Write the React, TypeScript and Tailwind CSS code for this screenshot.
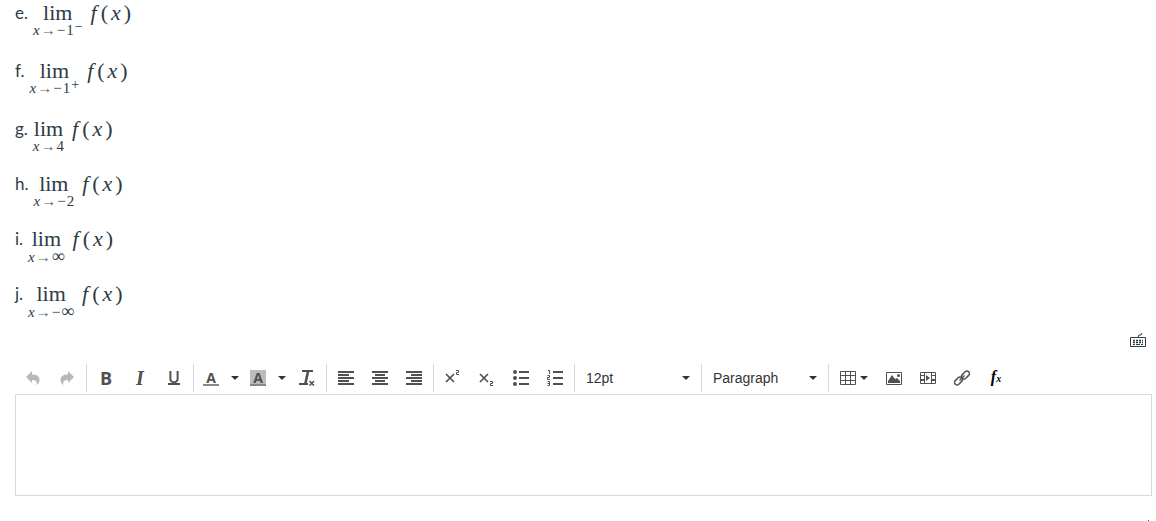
import React from 'react';

interface Limit {
  label: string;
  target: string;
  side?: string;
}

const limits: Limit[] = [
  { label: 'e.', target: '−1', side: '−' },
  { label: 'f.', target: '−1', side: '+' },
  { label: 'g.', target: '4' },
  { label: 'h.', target: '−2' },
  { label: 'i.', target: '∞' },
  { label: 'j.', target: '−∞' },
];

const LimitRow: React.FC<Limit> = ({ label, target, side }) => (
  <li className={`flex items-start gap-[5px] ${side ? 'h-[58px]' : 'h-[55px]'}`}>
    <span className="font-[Lato,sans-serif] text-[17px] leading-[18px]">{label}</span>
    <span className="flex items-start gap-2 font-['Liberation_Serif',serif]">
      <span className="flex flex-col items-center">
        <span className="text-[22px] leading-[18px]">lim</span>
        <span className="mt-px flex h-3 items-baseline gap-px text-[15px] leading-[14px]">
          <i className="leading-[14px]">x</i>
          <span className="leading-[14px] opacity-80">→</span>
          {target.split('').map((c) => (
            <span key={c} className={c === '∞' ? 'text-lg leading-[14px]' : 'leading-[14px]'}>{c}</span>
          ))}
          {side && <span className="-translate-y-1 text-sm leading-[14px]">{side}</span>}
        </span>
      </span>
      <span className="flex gap-0.5 text-[22px] leading-[18px]">
        <i className="pr-0.5">f</i>
        <span>(</span>
        <i className="px-px">x</i>
        <span>)</span>
      </span>
    </span>
  </li>
);

const Caret = () => (
  <svg width="8" height="4" viewBox="0 0 8 4" fill="#333"><path d="M0 0h8L4 4z" /></svg>
);

const Icon: React.FC<{ children: React.ReactNode }> = ({ children }) => (
  <svg width="16" height="16" viewBox="0 0 16 16" fill="currentColor">{children}</svg>
);

interface ToolProps {
  label: string;
  width?: string;
  disabled?: boolean;
  children: React.ReactNode;
}

const Tool: React.FC<ToolProps> = ({ label, width = 'w-[34px]', disabled, children }) => (
  <button
    type="button"
    aria-label={label}
    disabled={disabled}
    className={`flex h-7 items-center justify-center gap-1 disabled:opacity-40 ${width}`}
  >
    {children}
  </button>
);

const Group: React.FC<{ children: React.ReactNode }> = ({ children }) => (
  <div className="flex border-l border-[#d9d9d9] px-0.5">{children}</div>
);

const Picker: React.FC<{ label: string; options: string[] }> = ({ label, options }) => (
  <div className="relative flex w-[127px] items-center border-l border-[#d9d9d9]">
    <select
      aria-label={label}
      className="h-7 w-full appearance-none bg-transparent pl-[11px] font-['Liberation_Sans',sans-serif] text-sm text-[#333]"
    >
      {options.map((o) => <option key={o}>{o}</option>)}
    </select>
    <span className="pointer-events-none absolute right-[11px]"><Caret /></span>
  </div>
);

const Toolbar = () => (
  <div role="toolbar" aria-label="Formatting" className="flex h-7 pl-4 text-[#505050]">
    <div className="flex pr-0.5">
      <Tool label="Undo" disabled>
        <Icon><path d="M7 1v3.500c5 0 7.500 2 7.500 5.500 0 2-1 4-3 5 1-3.500-.5-5-4.500-5V13L1 7z" /></Icon>
      </Tool>
      <Tool label="Redo" disabled>
        <Icon><path d="M9 1v3.500c-5 0-7.500 2-7.500 5.500 0 2 1 4 3 5-1-3.500.5-5 4.500-5V13l6-6z" /></Icon>
      </Tool>
    </div>
    <Group>
      <Tool label="Bold"><span className="font-['Open_Sans',sans-serif] text-lg leading-4 font-bold">B</span></Tool>
      <Tool label="Italic"><span className="font-['Liberation_Serif',serif] text-xl leading-4 font-bold italic">I</span></Tool>
      <Tool label="Underline">
        <span className="w-3 border-b-2 border-current font-['Open_Sans',sans-serif] text-base leading-3 font-semibold">U</span>
      </Tool>
    </Group>
    <Group>
      <Tool label="Text color" width="w-[30px]">
        <span className="h-4 w-4 border-b-2 border-[#888] font-['Open_Sans',sans-serif] text-sm leading-4 font-bold">A</span>
      </Tool>
      <Tool label="Choose text color" width="w-[17px]"><Caret /></Tool>
      <Tool label="Background color" width="w-[30px]">
        <span className="h-4 w-4 border-b-2 border-[#888] bg-[#bbb] font-['Open_Sans',sans-serif] text-sm leading-4 font-bold">A</span>
      </Tool>
      <Tool label="Choose background color" width="w-[17px]"><Caret /></Tool>
      <Tool label="Clear formatting">
        <Icon>
          <path d="M3 0h11v2h-3.800L7.800 13H9v2H0v-2h5.200L7.600 2H3z" />
          <path d="m10.500 11 4.500 4.500m0-4.500-4.500 4.500" stroke="currentColor" strokeWidth="1.500" />
        </Icon>
      </Tool>
    </Group>
    <Group>
      <Tool label="Align left"><Icon><path d="M0 1h16v2H0zm0 3h11v2H0zm0 3h16v2H0zm0 3h11v2H0zm0 3h16v2H0z" /></Icon></Tool>
      <Tool label="Align center"><Icon><path d="M0 1h16v2H0zm3 3h10v2H3zm-3 3h16v2H0zm3 3h10v2H3zm-3 3h16v2H0z" /></Icon></Tool>
      <Tool label="Align right"><Icon><path d="M0 1h16v2H0zm5 3h11v2H5zM0 7h16v2H0zm5 3h11v2H5zm-5 3h16v2H0z" /></Icon></Tool>
    </Group>
    <Group>
      <Tool label="Superscript">
        <Icon>
          <path d="m1 4 8 8m0-8-8 8" stroke="currentColor" strokeWidth="1.700" />
          <path d="M11 .5h2.500v2h-2v2H14" fill="none" stroke="currentColor" />
        </Icon>
      </Tool>
      <Tool label="Subscript">
        <Icon>
          <path d="m1 4 8 8m0-8-8 8" stroke="currentColor" strokeWidth="1.700" />
          <path d="M11 11.500h2.500v2h-2v2H14" fill="none" stroke="currentColor" />
        </Icon>
      </Tool>
      <Tool label="Bulleted list">
        <Icon>
          <circle cx="2" cy="2" r="2" /><circle cx="2" cy="8" r="2" /><circle cx="2" cy="14" r="2" />
          <path d="M6 1h10v2H6zm0 6h10v2H6zm0 6h10v2H6z" />
        </Icon>
      </Tool>
      <Tool label="Numbered list">
        <Icon>
          <path d="M6 1h10v2H6zm0 6h10v2H6zm0 6h10v2H6z" />
          <path d="M1 .5h1.500V4M.5 5.500h2v2h-2v2H3M.5 11.500h2v4h-2m0-2h2" fill="none" stroke="currentColor" />
        </Icon>
      </Tool>
    </Group>
    <Picker label="Font size" options={['12pt', '14pt', '18pt']} />
    <Picker label="Block format" options={['Paragraph', 'Heading 2', 'Heading 3']} />
    <Group>
      <Tool label="Table" width="w-[46px]">
        <Icon>
          <path d="M.5 1.500h15v13H.5zM0 5.500h16M0 10.500h16M5.500 1v14m5-14v14" fill="none" stroke="currentColor" />
        </Icon>
        <Caret />
      </Tool>
      <Tool label="Embed image">
        <Icon>
          <path d="M.5 2.500h15v12H.5z" fill="none" stroke="currentColor" />
          <path d="M2 13v-2l4-6 3 4 2-1 3 3v2z" /><circle cx="12.500" cy="5.500" r="1.500" />
        </Icon>
      </Tool>
      <Tool label="Record media">
        <Icon>
          <path d="M.5 2.500h15v11H.5zM4.500 2v12m7-12v12" fill="none" stroke="currentColor" />
          <path d="M1 5h3v1H1zm0 4h3v2H1zm11-4h3v1h-3zm0 4h3v2h-3zM6 5l4 3-4 3z" />
        </Icon>
      </Tool>
      <Tool label="Link">
        <Icon>
          <g fill="none" stroke="currentColor" strokeWidth="1.500">
            <rect x="7" y="2.500" width="9" height="5" rx="2.500" transform="rotate(-45 11.500 5)" />
            <rect x="0" y="8.500" width="9" height="5" rx="2.500" transform="rotate(-45 4.500 11)" />
            <path d="m5.500 10.500 5-5" />
          </g>
        </Icon>
      </Tool>
      <Tool label="Insert math equation">
        <span className="font-['Liberation_Serif',serif] text-base leading-4 font-bold text-black italic">
          f<span className="text-[10px]">x</span>
        </span>
      </Tool>
    </Group>
  </div>
);

export default function App() {
  return (
    <main className="bg-white text-[#2d3b45]">
      <ol className="list-none pt-1 pl-[15px]">
        {limits.map((l) => <LimitRow key={l.label} {...l} />)}
      </ol>
      <div className="-mt-[7px] flex justify-end pr-[10px]">
        <button type="button" aria-label="Keyboard shortcuts">
          <svg width="16" height="14" viewBox="0 0 16 14" fill="none" stroke="currentColor" className="block">
            <path d="M.5 4.500h15v9H.5zM8 4l1-2h2l1-2" />
            <path d="M3 7.500h10M3 9.500h10" strokeWidth="1.500" strokeDasharray="2 1" />
            <path d="M3 11.500h2m1 0h4m1 0h2" />
          </svg>
        </button>
      </div>
      <div className="pt-[17px] pr-1">
        <Toolbar />
        <div className="pt-0.5 pl-[15px]">
          <textarea aria-label="Answer" className="block h-[102px] w-full resize-none border border-[#d9d9d9] p-2 outline-none" />
        </div>
      </div>
      <div className="flex justify-end pt-6 pr-[7px]">
        <span className="h-px w-px bg-[#b0108a]" />
      </div>
    </main>
  );
}
